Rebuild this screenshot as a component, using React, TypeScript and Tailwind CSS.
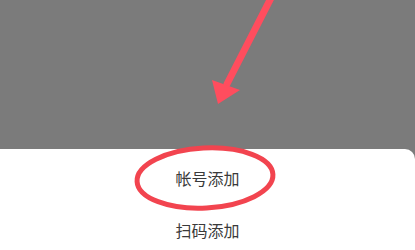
export default function App() {
  return (
    <div className="relative flex h-[250px] w-[415px] flex-col overflow-hidden bg-[#7b7b7b]">
      <div className="h-[149px] shrink-0" />
      <div className="flex flex-1 flex-col rounded-tr-[10px] bg-white pt-[2px] text-[16px] text-[#3a3a3a] [font-family:'Noto_Sans_CJK_SC',sans-serif]">
        <div className="flex h-[53px] items-center justify-center">帐号添加</div>
        <div className="flex h-[52px] items-center justify-center">扫码添加</div>
      </div>

      {/* red annotation: arrow and circle drawn over the screenshot */}
      <svg
        className="pointer-events-none absolute left-0 top-0"
        width="415"
        height="250"
        viewBox="0 0 415 250"
      >
        <line x1="272" y1="-4" x2="227" y2="84" stroke="#ff4d5e" strokeWidth="7" strokeLinecap="round" />
        <polygon points="212,80 240,90 218,104" fill="#ff4d5e" />
        <ellipse
          cx="205"
          cy="178"
          rx="68"
          ry="30"
          fill="none"
          stroke="#f2444f"
          strokeWidth="5"
          transform="rotate(-3 205 178)"
        />
      </svg>
    </div>
  );
}
